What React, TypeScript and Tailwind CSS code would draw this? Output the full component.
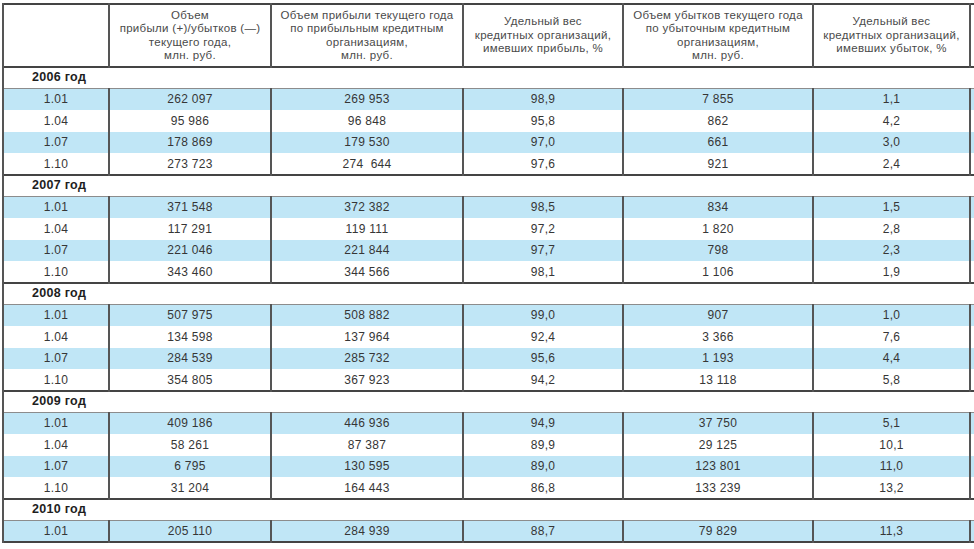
import React from "react";

type Row = [string, string, string, string, string, string];

const blocks: { year: string; rows: Row[] }[] = [
  {
    year: "2006 год",
    rows: [
      ["1.01", "262 097", "269 953", "98,9", "7 855", "1,1"],
      ["1.04", "95 986", "96 848", "95,8", "862", "4,2"],
      ["1.07", "178 869", "179 530", "97,0", "661", "3,0"],
      ["1.10", "273 723", "274\u00a0\u00a0644", "97,6", "921", "2,4"],
    ],
  },
  {
    year: "2007 год",
    rows: [
      ["1.01", "371 548", "372 382", "98,5", "834", "1,5"],
      ["1.04", "117 291", "119 111", "97,2", "1 820", "2,8"],
      ["1.07", "221 046", "221 844", "97,7", "798", "2,3"],
      ["1.10", "343 460", "344 566", "98,1", "1 106", "1,9"],
    ],
  },
  {
    year: "2008 год",
    rows: [
      ["1.01", "507 975", "508 882", "99,0", "907", "1,0"],
      ["1.04", "134 598", "137 964", "92,4", "3 366", "7,6"],
      ["1.07", "284 539", "285 732", "95,6", "1 193", "4,4"],
      ["1.10", "354 805", "367 923", "94,2", "13 118", "5,8"],
    ],
  },
  {
    year: "2009 год",
    rows: [
      ["1.01", "409 186", "446 936", "94,9", "37 750", "5,1"],
      ["1.04", "58 261", "87 387", "89,9", "29 125", "10,1"],
      ["1.07", "6 795", "130 595", "89,0", "123 801", "11,0"],
      ["1.10", "31 204", "164 443", "86,8", "133 239", "13,2"],
    ],
  },
  {
    year: "2010 год",
    rows: [["1.01", "205 110", "284 939", "88,7", "79 829", "11,3"]],
  },
];

const headers: string[][] = [
  [],
  ["Объем", "прибыли (+)/убытков (—)", "текущего года,", "млн. руб."],
  ["Объем прибыли текущего года", "по прибыльным кредитным", "организациям,", "млн. руб."],
  ["Удельный вес", "кредитных организаций,", "имевших прибыль, %"],
  ["Объем убытков текущего года", "по убыточным кредитным", "организациям,", "млн. руб."],
  ["Удельный вес", "кредитных организаций,", "имевших убыток, %"],
  [],
];

const cellX = "border-x-2 border-x-[#555] text-center align-middle p-0";

export default function App() {
  return (
    <div
      className="w-[974px] h-[549px] overflow-hidden bg-white"
      style={{ fontFamily: '"Liberation Sans", Arial, sans-serif' }}
    >
      <table className="table-fixed border-collapse ml-[2px] mt-[3px] w-[1026px] text-[#363636] text-[12px] tracking-[0.3px]">
        <colgroup>
          <col className="w-[106px]" />
          <col className="w-[162px]" />
          <col className="w-[192px]" />
          <col className="w-[160px]" />
          <col className="w-[190px]" />
          <col className="w-[157px]" />
          <col className="w-[59px]" />
        </colgroup>
        <thead>
          <tr className="h-[63px] border-t-2 border-t-[#444] border-b-2 border-b-[#444]">
            {headers.map((h, i) => (
              <th
                key={i}
                className={`${cellX} font-normal text-[11.5px] leading-[13.5px] text-[#4a4a4a]`}
              >
                {h.map((l, j) => (
                  <div key={j}>{l}</div>
                ))}
              </th>
            ))}
          </tr>
        </thead>
        <tbody>
          {blocks.map((b, bi) => (
            <React.Fragment key={bi}>
              <tr className="h-[21px] border-t-2 border-t-[#444] border-b border-b-[#8c8c8c]">
                <td
                  colSpan={7}
                  className="border-l-2 border-l-[#555] p-0 pl-[28px] text-left align-middle font-bold text-[12.5px] text-[#1e1e1e]"
                >
                  {b.year}
                </td>
              </tr>
              {b.rows.map((r, ri) => (
                <tr
                  key={ri}
                  className={`h-[21.75px] ${ri % 2 === 0 ? "bg-[#c0e6f6]" : "bg-white"} ${
                    bi === blocks.length - 1 ? "border-b-2 border-b-[#444]" : ""
                  }`}
                >
                  {r.map((c, ci) => (
                    <td key={ci} className={`${cellX} whitespace-pre`}>
                      {c}
                    </td>
                  ))}
                  <td className={cellX}></td>
                </tr>
              ))}
            </React.Fragment>
          ))}
        </tbody>
      </table>
    </div>
  );
}
